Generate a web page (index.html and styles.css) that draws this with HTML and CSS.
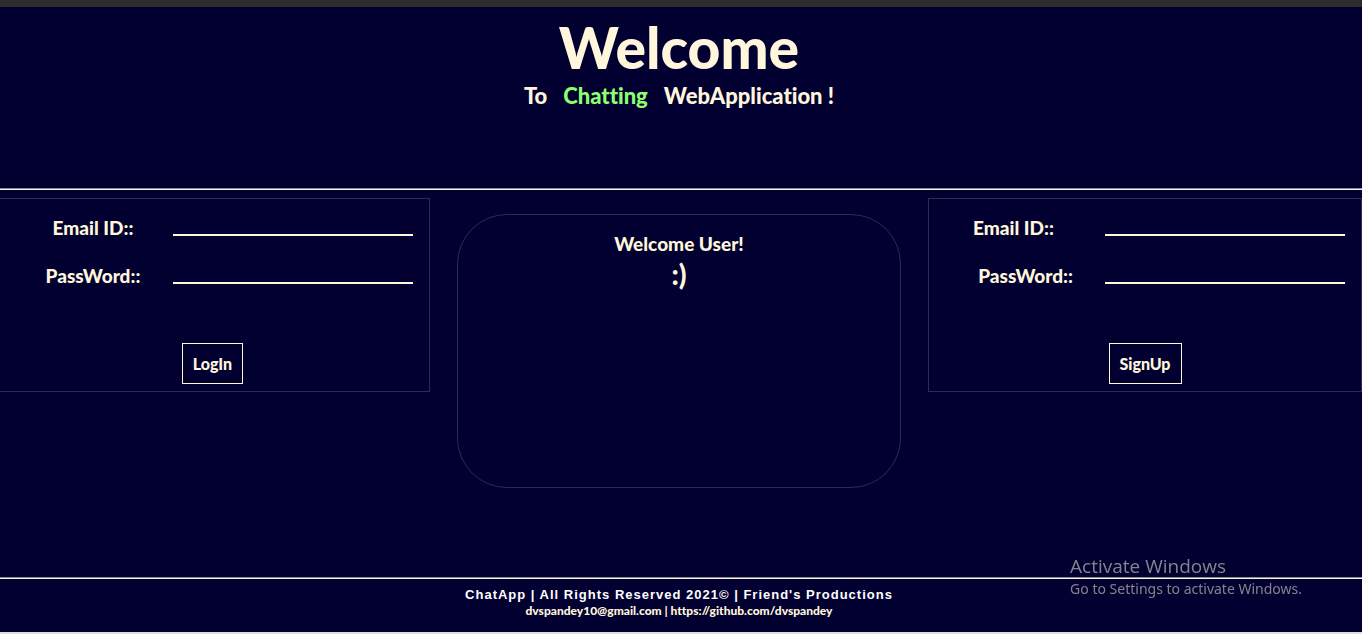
FILE: index.html
```
<!DOCTYPE html>
<html lang="en">
<head>
<meta charset="utf-8">
<meta name="viewport" content="width=device-width, initial-scale=1">
<title>ChatApp</title>
<link rel="stylesheet" href="styles.css">
</head>
<body class="page">
<header class="hero">
  <h1 class="hero-title">Welcome</h1>
  <p class="hero-subtitle"><span>To</span><span class="accent">Chatting</span><span>WebApplication !</span></p>
</header>
<main class="panels">
  <form class="card login">
    <div class="field">
      <label class="field-label" for="login-email">Email ID::</label>
      <input class="field-input" id="login-email" type="email">
    </div>
    <div class="field">
      <label class="field-label" for="login-password">PassWord::</label>
      <input class="field-input" id="login-password" type="password">
    </div>
    <button class="submit" type="button">LogIn</button>
  </form>
  <section class="greeting">
    <h2 class="greeting-title">Welcome User!</h2>
    <p class="greeting-smile">:)</p>
  </section>
  <form class="card signup">
    <div class="field">
      <label class="field-label" for="signup-email">Email ID::</label>
      <input class="field-input" id="signup-email" type="email">
    </div>
    <div class="field">
      <label class="field-label field-label-end" for="signup-password">PassWord::</label>
      <input class="field-input" id="signup-password" type="password">
    </div>
    <button class="submit" type="button">SignUp</button>
  </form>
</main>
<footer class="footer">
  <p class="copyright">ChatApp | All Rights Reserved 2021© | Friend's Productions</p>
  <p class="contact"><a class="contact-link" href="mailto:dvspandey10@gmail.com">dvspandey10@gmail.com</a> | <a class="contact-link" href="https://github.com/dvspandey">https://github.com/dvspandey</a></p>
</footer>
<aside class="activation">
  <p class="activation-title">Activate Windows</p>
  <p class="activation-text">Go to Settings to activate Windows.</p>
</aside>
</body>
</html>
```
FILE: styles.css
```
* {
  box-sizing: border-box;
}

.page {
  display: flex;
  flex-direction: column;
  min-height: 100vh;
  margin: 0;
  border-top: 7px solid #2d2d2d;
  border-bottom: 2px solid #dedede;
  background: #020030;
  color: #fff6dc;
  font-family: Lato, "Open Sans", sans-serif;
  font-weight: 900;
  font-variant-ligatures: none;
}

h1, h2, p {
  margin: 0;
}

.hero {
  padding: 6px 4px 78px 0;
  border-bottom: 1px solid #f4f4f4;
  box-shadow: inset 0 -1px #8a8a90;
  text-align: center;
}

.hero-title {
  font-size: 57px;
  line-height: 68px;
  font-weight: 900;
}

.hero-subtitle {
  display: flex;
  justify-content: center;
  gap: 16px;
  font-size: 22px;
  line-height: 30px;
}

.accent {
  color: #8cff70;
}

.panels {
  display: grid;
  grid-template-columns: 430fr 444fr 434fr;
  gap: 27px;
  align-items: start;
  flex: 1;
  padding-top: 8px;
}

.card {
  display: flex;
  flex-direction: column;
  gap: 16px;
  padding: 13px 16px 7px 0;
  border: 1px solid #2f2b4d;
}

.login {
  border-left: 0;
}

.field {
  display: flex;
  justify-content: flex-end;
  align-items: flex-start;
  gap: 32px;
}

.field-label {
  width: 96px;
  font-size: 19px;
  line-height: 32px;
  text-align: center;
  white-space: nowrap;
}

.signup .field-label {
  width: 100px;
  text-align: left;
}

.signup .field-label-end {
  text-align: right;
}

.field-input {
  width: 240px;
  height: 24px;
  padding: 0 2px;
  border: 0;
  border-bottom: 2px solid #fff8dc;
  outline: 0;
  background: transparent;
  color: inherit;
  font: inherit;
}

.submit {
  align-self: center;
  height: 41px;
  margin-top: 35px;
  padding: 0 10px;
  border: 1px solid #fff8dc;
  background: transparent;
  color: inherit;
  font-family: inherit;
  font-size: 16px;
  font-weight: 900;
}

.signup .submit {
  margin-left: 16px;
}

.login .submit {
  margin-left: 12px;
}

.greeting {
  min-height: 274px;
  margin-top: 16px;
  padding-top: 16px;
  border: 1px solid #2f2b4d;
  border-radius: 50px;
  text-align: center;
}

.greeting-title {
  font-size: 19px;
  line-height: 26px;
  font-weight: 900;
}

.greeting-smile {
  font-size: 28px;
  line-height: 34px;
}

.footer {
  padding: 8px 4px 14px 0;
  border-top: 1px solid #8a8a90;
  box-shadow: inset 0 1px #f4f4e4;
  text-align: center;
}

.copyright {
  color: #fff;
  font-family: "Liberation Sans", Arial, sans-serif;
  font-size: 13px;
  line-height: 17px;
  font-weight: 700;
  letter-spacing: 1px;
}

.contact {
  font-size: 12px;
  line-height: 15px;
}

.contact-link {
  color: inherit;
  text-decoration: none;
}

.activation {
  position: fixed;
  right: 60px;
  bottom: 34px;
  color: #84848d;
  font-family: "Open Sans", "Noto Sans", sans-serif;
  font-weight: 400;
  pointer-events: none;
}

.activation-title {
  font-size: 19px;
  line-height: 24px;
}

.activation-text {
  font-family: "Noto Sans", sans-serif;
  font-size: 14px;
  line-height: 22px;
}
```
